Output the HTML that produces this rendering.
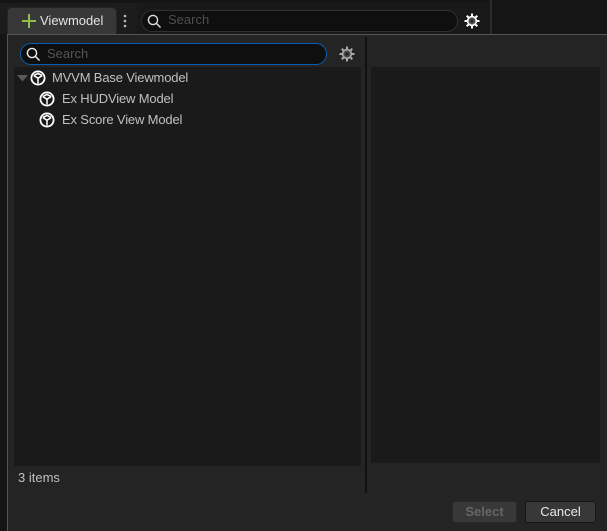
<!DOCTYPE html>
<html><head><meta charset="utf-8"><style>
html,body{margin:0;padding:0;background:#151515;width:607px;height:531px;overflow:hidden}
#r{position:absolute;left:0;top:0;width:607px;height:531px;overflow:hidden;font-family:"Liberation Sans",sans-serif;background:#151515}
#r div{position:absolute;box-sizing:border-box;white-space:nowrap}
svg{position:absolute;overflow:visible}
.t{font-size:13px;line-height:16px;color:#c0c0c0}
.n{letter-spacing:-.16px}
</style></head><body><div id="r">
<div style="left:0;top:3px;width:137px;height:31px;background:#1c1c1c"></div>
<div style="left:137px;top:3px;width:354px;height:31px;background:#191919"></div>
<div style="left:490px;top:0;width:2px;height:34px;background:#2c2c2c"></div>
<div style="left:7px;top:7px;width:110px;height:28px;background:#383838;border-radius:5px 5px 0 0;border:1px solid #252525"></div>
<svg style="left:22px;top:14px" width="14" height="14"><path d="M7 0V14M0 7H14" stroke="#8fbf4a" stroke-width="2"/></svg>
<div class="t" style="left:40px;top:13px;color:#e4e4e4">Viewmodel</div>
<svg style="left:123px;top:14px" width="4" height="14"><circle cx="2" cy="2" r="1.3" fill="#bbb"/><circle cx="2" cy="7" r="1.3" fill="#bbb"/><circle cx="2" cy="12" r="1.3" fill="#bbb"/></svg>
<div style="left:141px;top:10px;width:317px;height:22px;border-radius:11px;background:#0f0f0f;border:1px solid #303030"></div>
<svg style="left:147px;top:14px" width="14" height="14"><circle cx="6" cy="6" r="4.6" fill="none" stroke="#ddd" stroke-width="1.4"/><path d="M9.5 9.5L13.5 13.5" stroke="#ddd" stroke-width="1.5"/></svg>
<div class="t" style="left:168px;top:12px;color:#4e4e4e">Search</div>
<svg style="left:464px;top:13px" width="16" height="16"><circle cx="8" cy="8" r="4.4" fill="#555" stroke="#fff" stroke-width="1.6"/><circle cx="8" cy="8" r="1.6" fill="#222"/><path d="M8 0.5V3M8 13V15.5M0.5 8H3M13 8H15.5M2.7 2.7L4.5 4.5M11.5 11.5L13.3 13.3M2.7 13.3L4.5 11.5M11.5 4.5L13.3 2.7" stroke="#fff" stroke-width="2"/></svg>

<div style="left:7px;top:34px;width:610px;height:510px;background:#242424;border:1px solid #555"></div>
<div style="left:14px;top:67px;width:347px;height:399px;background:#1a1a1a"></div>
<div style="left:371px;top:67px;width:229px;height:396px;background:#1a1a1a"></div>
<div style="left:365px;top:37px;width:2px;height:456px;background:#111"></div>
<div style="left:20px;top:43px;width:307px;height:22px;border-radius:11px;background:#0f0f0f;border:1.5px solid #0a5cb8"></div>
<svg style="left:26px;top:47px" width="14" height="14"><circle cx="6" cy="6" r="4.6" fill="none" stroke="#eee" stroke-width="1.4"/><path d="M9.5 9.5L13.5 13.5" stroke="#eee" stroke-width="1.5"/></svg>
<div class="t" style="left:47px;top:46px;color:#555">Search</div>
<svg style="left:339px;top:46px" width="16" height="16"><circle cx="8" cy="8" r="4.4" fill="#4a4a4a" stroke="#aaa" stroke-width="1.6"/><circle cx="8" cy="8" r="1.6" fill="#222"/><path d="M8 0.5V3M8 13V15.5M0.5 8H3M13 8H15.5M2.7 2.7L4.5 4.5M11.5 11.5L13.3 13.3M2.7 13.3L4.5 11.5M11.5 4.5L13.3 2.7" stroke="#aaa" stroke-width="2"/></svg>

<svg style="left:17px;top:75px" width="11" height="7"><path d="M0 0H11L5.5 6.5Z" fill="#5a5a5a"/></svg>
<svg style="left:30px;top:70px" width="16" height="16"><circle cx="8" cy="8" r="6.6" fill="#1a1a1a" stroke="#fff" stroke-width="1.8"/><path d="M3.8 5.6L8 8.2L12.2 5.6M8 8.2V13.5M3.8 5.6L8 3.4L12.2 5.6" fill="none" stroke="#fff" stroke-width="1.5"/></svg>
<div class="t n" style="left:52px;top:70px">MVVM Base Viewmodel</div>
<svg style="left:39px;top:91px" width="16" height="16"><circle cx="8" cy="8" r="6.6" fill="#1a1a1a" stroke="#fff" stroke-width="1.8"/><path d="M3.8 5.6L8 8.2L12.2 5.6M8 8.2V13.5M3.8 5.6L8 3.4L12.2 5.6" fill="none" stroke="#fff" stroke-width="1.5"/></svg>
<div class="t n" style="left:62px;top:91px">Ex HUDView Model</div>
<svg style="left:39px;top:112px" width="16" height="16"><circle cx="8" cy="8" r="6.6" fill="#1a1a1a" stroke="#fff" stroke-width="1.8"/><path d="M3.8 5.6L8 8.2L12.2 5.6M8 8.2V13.5M3.8 5.6L8 3.4L12.2 5.6" fill="none" stroke="#fff" stroke-width="1.5"/></svg>
<div class="t n" style="left:62px;top:112px">Ex Score View Model</div>
<div class="t" style="left:18px;top:470px">3 items</div>

<div style="left:452px;top:501px;width:65px;height:22px;background:#383838;border:1px solid #2a2a2a;border-radius:3px"></div>
<div class="t" style="left:452px;top:504px;width:65px;text-align:center;color:#666;font-weight:bold">Select</div>
<div style="left:525px;top:501px;width:71px;height:22px;background:#383838;border:1px solid #161616;border-radius:3px"></div>
<div class="t" style="left:525px;top:504px;width:71px;text-align:center;color:#e8e8e8">Cancel</div>
</div></body></html>
